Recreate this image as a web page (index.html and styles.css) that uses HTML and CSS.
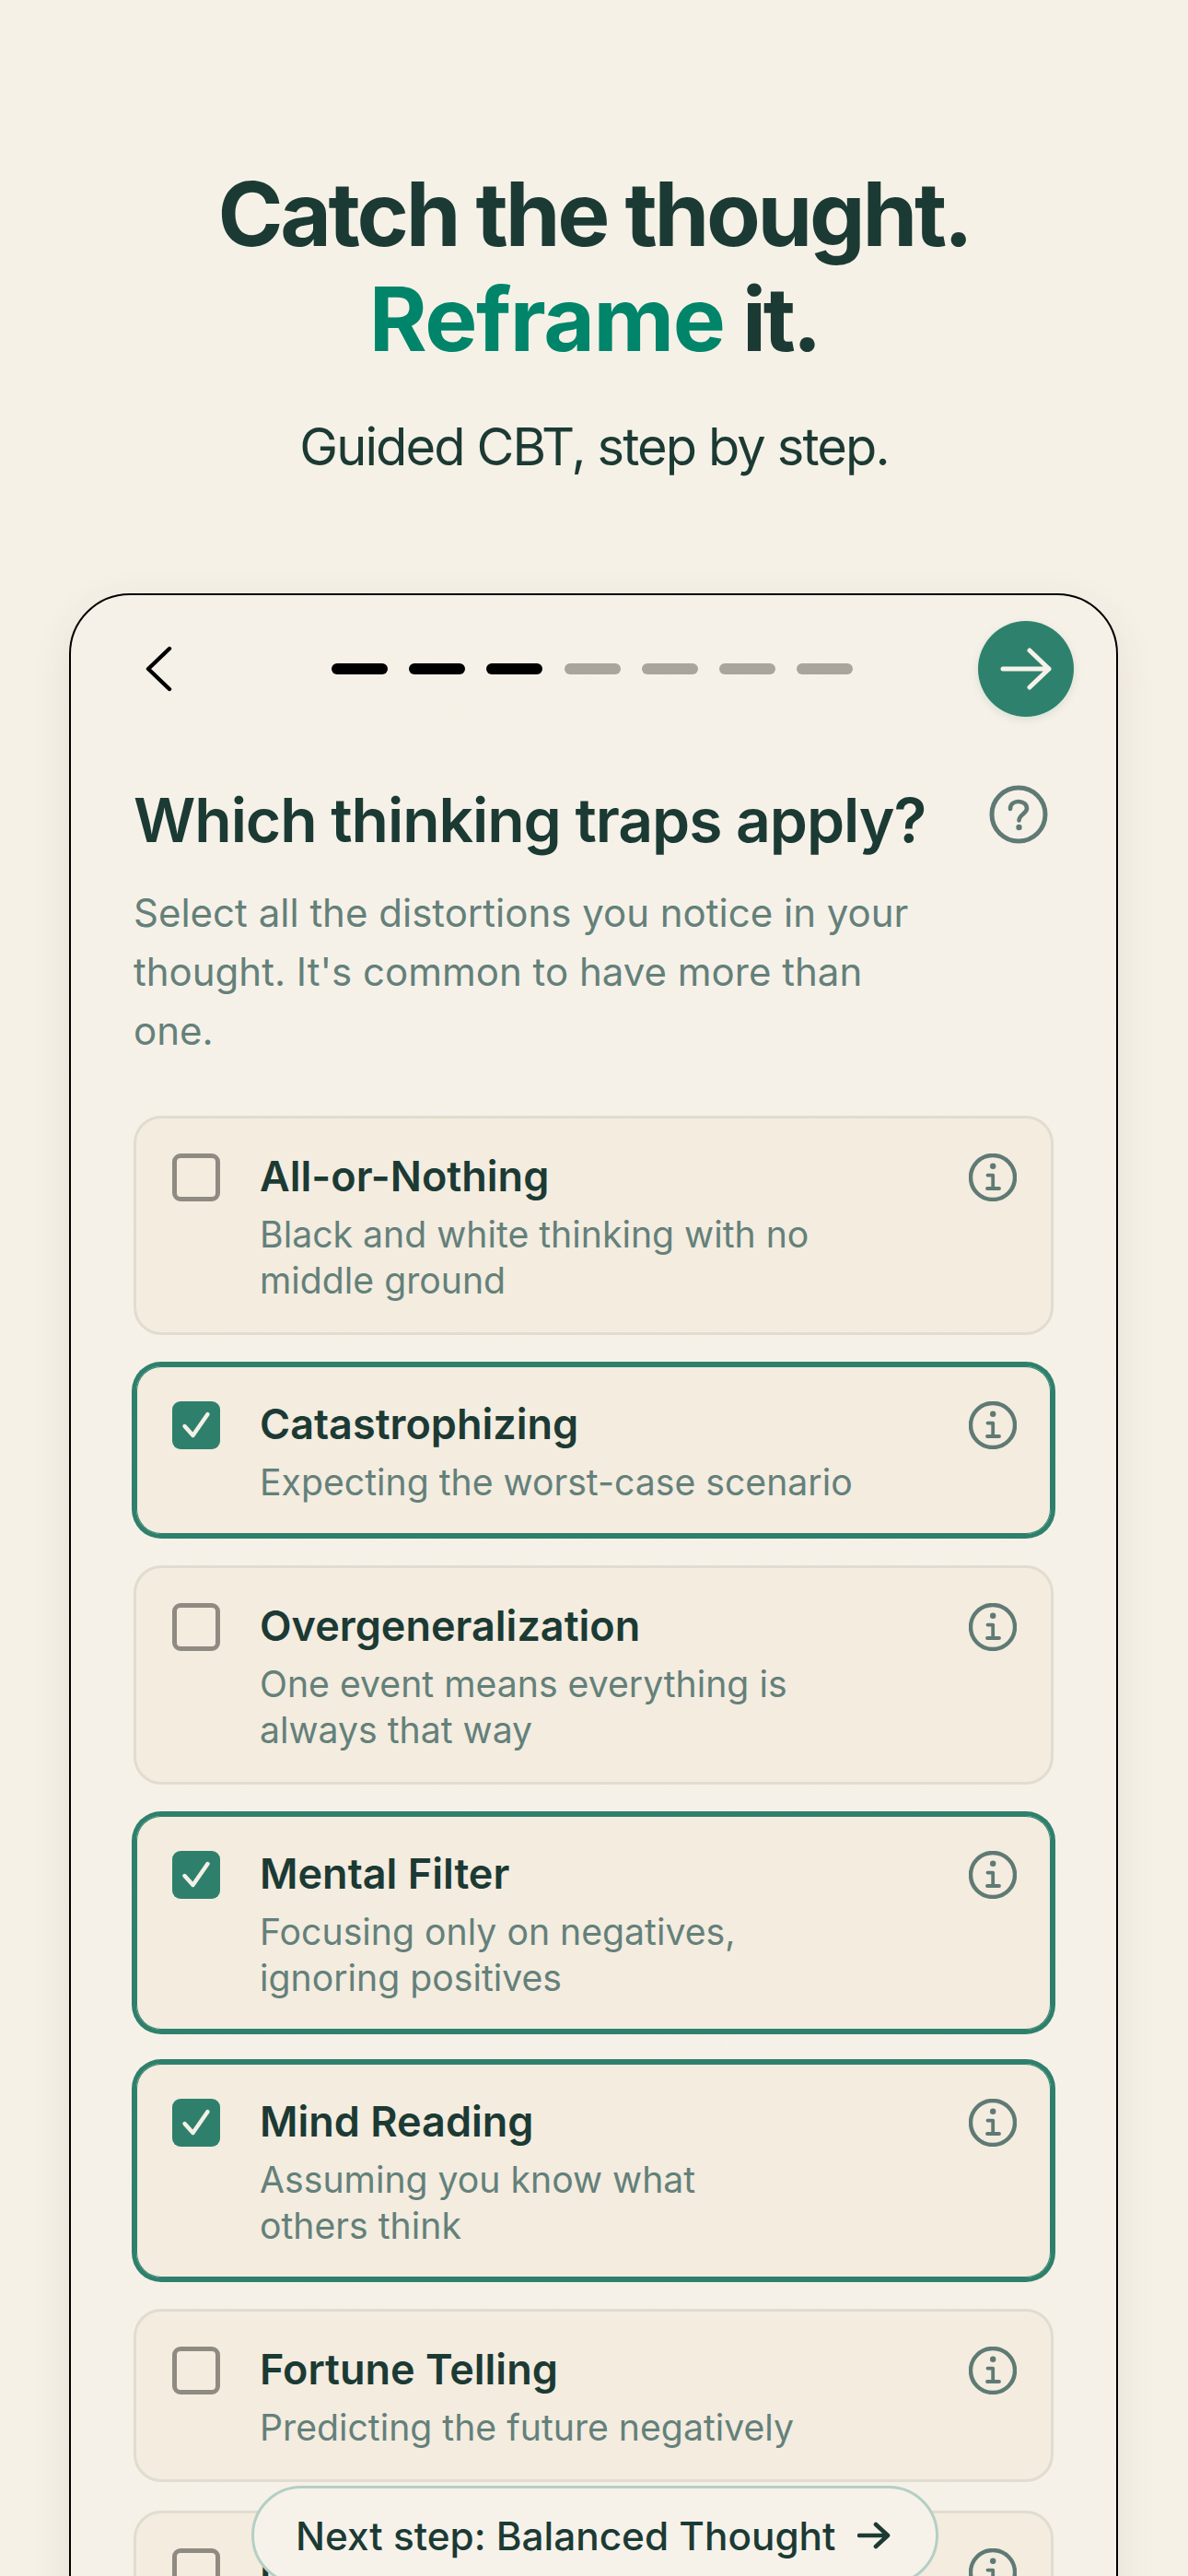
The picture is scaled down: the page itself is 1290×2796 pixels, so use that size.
FILE: index.html
```html
<!DOCTYPE html>
<html lang="en">
<head>
    <meta charset="UTF-8">
    <meta name="viewport" content="width=device-width, initial-scale=1.0">
    <title>Thinking traps</title>
    <link rel="stylesheet" href="styles.css">
</head>
<body>

    <svg class="defs" width="0" height="0" aria-hidden="true">
        <filter id="grain">
            <feTurbulence type="fractalNoise" baseFrequency="0.75" numOctaves="3" stitchTiles="stitch"/>
            <feColorMatrix type="matrix" values="0 0 0 0 0.55  0 0 0 0 0.5  0 0 0 0 0.4  0 0 0 0.07 0"/>
        </filter>
        <symbol id="info" viewBox="0 0 52 52">
            <circle cx="26" cy="26" r="24" fill="none" stroke="currentColor" stroke-width="4.4"/>
            <circle cx="26.2" cy="13.8" r="3.2" fill="currentColor"/>
            <path d="M20.5 23.6H26.2V38M20 38H33" fill="none" stroke="currentColor" stroke-width="3.8" stroke-linecap="round" stroke-linejoin="round"/>
        </symbol>
        <symbol id="tick" viewBox="0 0 52 52">
            <path d="M13.5 27L22.5 37L38.5 14" fill="none" stroke="#f5f0e6" stroke-width="4.4" stroke-linecap="round" stroke-linejoin="round"/>
        </symbol>
    </svg>

    <header class="hero">
        <h1 class="hero-title">Catch the thought.<br><span class="accent">Reframe</span> it.</h1>
        <p class="hero-sub">Guided CBT, step by step.</p>
    </header>

    <main class="phone">
        <svg class="grain" aria-hidden="true"><rect width="100%" height="100%" filter="url(#grain)"/></svg>

        <nav class="top-bar">
            <svg class="back" width="30" height="50" viewBox="0 0 30 50"><path d="M26 3L3 25L26 47" fill="none" stroke="#000" stroke-width="4.4" stroke-linecap="round" stroke-linejoin="round"/></svg>
            <div class="steps">
                <span class="step done"></span>
                <span class="step done"></span>
                <span class="step done"></span>
                <span class="step"></span>
                <span class="step"></span>
                <span class="step"></span>
                <span class="step"></span>
            </div>
            <button class="next">
                <svg width="56" height="46" viewBox="0 0 56 46"><path d="M3 23H53M32 3L53 23L32 43" fill="none" stroke="#f7f2e9" stroke-width="5" stroke-linecap="round" stroke-linejoin="round"/></svg>
            </button>
        </nav>

        <div class="heading-row">
            <h2 class="heading">Which thinking traps apply?</h2>
            <svg class="help" width="64" height="64" viewBox="0 0 64 64">
                <circle cx="32" cy="32" r="29" fill="none" stroke="currentColor" stroke-width="5"/>
                <path d="M23 26C23 21 27 18 32 18C37 18 41 21 41 25.500C41 31 32.500 32 32.500 38.500" fill="none" stroke="currentColor" stroke-width="4.600" stroke-linecap="round"/>
                <circle cx="32.500" cy="46" r="3.200" fill="currentColor"/>
            </svg>
        </div>
        <p class="lead">Select all the distortions you notice in your<br>thought. It's common to have more than<br>one.</p>

        <div class="traps">
            <div class="trap">
                <span class="box"></span>
                <div class="trap-text">
                    <h3>All-or-Nothing</h3>
                    <p>Black and white thinking with no<br>middle ground</p>
                </div>
                <svg class="info"><use href="#info"/></svg>
            </div>
            <div class="trap selected">
                <span class="box"><svg><use href="#tick"/></svg></span>
                <div class="trap-text">
                    <h3>Catastrophizing</h3>
                    <p>Expecting the worst-case scenario</p>
                </div>
                <svg class="info"><use href="#info"/></svg>
            </div>
            <div class="trap">
                <span class="box"></span>
                <div class="trap-text">
                    <h3>Overgeneralization</h3>
                    <p>One event means everything is<br>always that way</p>
                </div>
                <svg class="info"><use href="#info"/></svg>
            </div>
            <div class="trap selected">
                <span class="box"><svg><use href="#tick"/></svg></span>
                <div class="trap-text">
                    <h3>Mental Filter</h3>
                    <p>Focusing only on negatives,<br>ignoring positives</p>
                </div>
                <svg class="info"><use href="#info"/></svg>
            </div>
            <div class="trap selected">
                <span class="box"><svg><use href="#tick"/></svg></span>
                <div class="trap-text">
                    <h3>Mind Reading</h3>
                    <p>Assuming you know what<br>others think</p>
                </div>
                <svg class="info"><use href="#info"/></svg>
            </div>
            <div class="trap">
                <span class="box"></span>
                <div class="trap-text">
                    <h3>Fortune Telling</h3>
                    <p>Predicting the future negatively</p>
                </div>
                <svg class="info"><use href="#info"/></svg>
            </div>
            <div class="trap">
                <span class="box"></span>
                <div class="trap-text">
                    <h3>Labeling</h3>
                </div>
                <svg class="info"><use href="#info"/></svg>
            </div>
        </div>
    </main>

    <button class="next-step">
        Next step: Balanced Thought
        <svg width="36" height="30" viewBox="0 0 36 30"><path d="M2 15H33M20 3L33 15L20 27" fill="none" stroke="currentColor" stroke-width="4.600" stroke-linecap="round" stroke-linejoin="round"/></svg>
    </button>

</body>
</html>
```

FILE: styles.css
```css
* {
    margin: 0;
    padding: 0;
    box-sizing: border-box;
    font-family: 'Inter', 'Liberation Sans', sans-serif;
}

html, body {
    height: 2796px;
    overflow: hidden;
}

body {
    background: #f6f1e7;
    color: #1c3a34;
}

.defs {
    position: absolute;
}

.hero {
    padding-top: 175px;
    text-align: center;
}

.hero-title {
    font-size: 96px;
    line-height: 114px;
    font-weight: 700;
    letter-spacing: -3.3px;
}

.accent {
    color: #00856a;
    letter-spacing: -1.4px;
}

.hero-sub {
    margin-top: 48px;
    font-size: 56px;
    line-height: 68px;
    font-weight: 400;
    letter-spacing: -1.9px;
}

.phone {
    position: relative;
    margin: 125px 76px 0 75px;
    height: 2400px;
    padding: 0 68px;
    background: #f8f3ea;
    border: 2px solid #000;
    border-radius: 66px;
    box-shadow: 0 12px 44px rgba(70, 60, 30, 0.09);
    overflow: hidden;
}

.grain {
    position: absolute;
    top: 0;
    left: 0;
    width: 100%;
    height: 100%;
}

.top-bar, .heading-row, .lead, .traps {
    position: relative;
}

.top-bar {
    display: flex;
    align-items: center;
    justify-content: space-between;
    height: 104px;
    margin-top: 28px;
    margin-right: -22px;
    padding-left: 13px;
}

.steps {
    display: flex;
    gap: 23.3px;
    margin-left: 36px;
}

.step {
    width: 61px;
    height: 12px;
    border-radius: 6px;
    background: #aaa59c;
}

.step.done {
    background: #000;
}

.next {
    display: flex;
    align-items: center;
    justify-content: center;
    width: 104px;
    height: 104px;
    border: none;
    border-radius: 50%;
    background: #2e826d;
    box-shadow: 0 3px 10px rgba(46, 130, 109, 0.15);
}

.heading-row {
    display: flex;
    align-items: center;
    justify-content: space-between;
    margin-top: 72px;
    padding-right: 6px;
}

.heading {
    font-size: 66px;
    line-height: 80px;
    font-weight: 600;
    letter-spacing: -1.05px;
}

.help {
    color: #5f7a74;
    margin-top: -12px;
}

.lead {
    margin-top: 29px;
    font-size: 42px;
    line-height: 64px;
    color: #64807a;
}

.traps {
    display: flex;
    flex-direction: column;
    gap: 31px;
    margin-top: 60px;
}

.trap {
    display: flex;
    align-items: flex-start;
    padding: 36px 37px 31px 39px;
    background: #f3ecdf;
    border: 3px solid #e1dcd0;
    border-radius: 30px;
}

.trap.selected {
    border-color: #2e806c;
    box-shadow: 0 0 0 2px #2e806c, inset 0 0 0 1px #2e806c;
}

.box {
    flex: none;
    width: 52px;
    height: 52px;
    margin-top: 2px;
    border: 5px solid #8f8b82;
    border-radius: 9px;
}

.selected .box {
    border: none;
    background: #2e806c;
}

.box svg {
    display: block;
    width: 52px;
    height: 52px;
}

.trap-text {
    flex: 1;
    margin-left: 43px;
}

.trap-text h3 {
    font-size: 45px;
    line-height: 54px;
    font-weight: 600;
}

.trap-text p {
    margin-top: 11px;
    font-size: 39.2px;
    line-height: 50px;
    color: #64807a;
}

.info {
    flex: none;
    width: 52px;
    height: 52px;
    margin-top: 2px;
    color: #5f7a74;
}

.next-step {
    position: fixed;
    top: 2698px;
    left: 273px;
    display: flex;
    align-items: center;
    gap: 24px;
    height: 108px;
    padding: 0 49px 0 45px;
    font-size: 42.3px;
    font-weight: 500;
    color: #1c3a34;
    background: #f6f2ea;
    border: 3px solid #b5cfc4;
    border-radius: 54px;
}
```
